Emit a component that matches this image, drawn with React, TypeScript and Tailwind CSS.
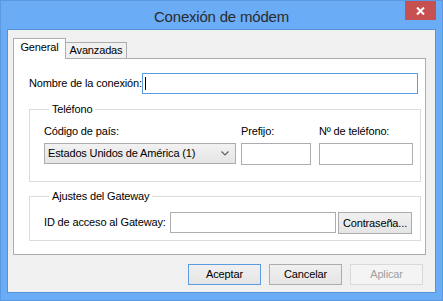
import React from 'react'

const font = { fontFamily: '"Liberation Sans", Arial, sans-serif' }

function TextBox({ className = '', focused = false }: { className?: string; focused?: boolean }) {
  return (
    <div
      className={`bg-white border ${focused ? 'border-[#5a9de2]' : 'border-[#abadb3]'} flex items-center pl-[2px] ${className}`}
    >
      {focused && <div className="w-px h-[13px] bg-black" />}
    </div>
  )
}

function Button({ label, kind = 'normal' }: { label: string; kind?: 'normal' | 'default' | 'disabled' }) {
  const border =
    kind === 'default' ? 'border-[#5b9de0]' : kind === 'disabled' ? 'border-[#d9d9d9]' : 'border-[#acacac]'
  const bg = kind === 'disabled' ? 'bg-[#f4f4f4]' : 'bg-gradient-to-b from-[#f0f0f0] to-[#e5e5e5]'
  const color = kind === 'disabled' ? 'text-[#a0a0a0]' : 'text-black'
  return (
    <div className={`w-[73px] h-[21px] border ${border} ${bg} ${color} flex items-center justify-center`}>
      {label}
    </div>
  )
}

export default function App() {
  return (
    <div
      style={font}
      className="w-[443px] h-[301px] bg-[#6aacf5] border border-[#5a98df] flex flex-col px-[6px] pb-[7px] text-[11px] tracking-[-0.15px] text-black"
    >
      {/* Title bar */}
      <div className="h-[28px] -mx-[6px] grid grid-cols-[1fr_auto_1fr]">
        <div />
        <div className="pt-[7px] text-[15px] leading-[18px] tracking-[-0.2px] text-[#2b2b2b]">Conexión de módem</div>
        <div className="flex justify-end pr-[6px]">
          <div className="w-[31px] h-[19px] bg-[#c75050] flex items-center justify-center">
            <svg width="9" height="8" viewBox="0 0 9 8">
              <path d="M1 0.5 L8 7.5 M8 0.5 L1 7.5" stroke="white" strokeWidth="2" />
            </svg>
          </div>
        </div>
      </div>

      {/* Client area */}
      <div className="flex-1 flex flex-col bg-[#f0f0f0] border border-[#5592d8] px-[5px] pt-[8px]">
        {/* Tabs */}
        <div className="flex items-end h-[20px]">
          <div className="relative z-10 w-[53px] h-[21px] -mb-px bg-white border-t border-l border-r border-[#adadad] flex justify-center pt-px leading-[15px]">
            General
          </div>
          <div className="w-[61px] h-[16px] border-t border-r border-[#adadad] bg-[#f0f0f0] flex justify-center leading-[15px]">
            Avanzadas
          </div>
        </div>

        {/* Tab panel */}
        <div className="w-[413px] h-[197px] bg-white border border-[#adadad] flex flex-col pl-[15px] pt-[14px]">
          <div className="flex items-center">
            <div className="w-[113px]">Nombre de la conexión:</div>
            <TextBox focused className="w-[276px] h-[21px]" />
          </div>

          <fieldset className="mt-[8px] w-[392px] border border-[#dcdcdc] pl-[14px] pt-[7px] pb-[16px]">
            <legend className="ml-[5px] px-[3px] leading-[15px]">Teléfono</legend>
            <div className="flex">
              <div className="flex flex-col">
                <div className="leading-[15px] mb-[4px]">Código de país:</div>
                <div className="w-[192px] h-[21px] border border-[#acacac] bg-gradient-to-b from-[#f2f2f2] to-[#e5e5e5] flex items-center pl-[3px] pr-[6px]">
                  <span className="flex-1">Estados Unidos de América (1)</span>
                  <svg width="8" height="5" viewBox="0 0 8 5">
                    <path d="M0.5 0.5 L4 4 L7.5 0.5" fill="none" stroke="#606060" strokeWidth="1.2" />
                  </svg>
                </div>
              </div>
              <div className="flex flex-col ml-[5px]">
                <div className="leading-[15px] mb-[4px]">Prefijo:</div>
                <TextBox className="w-[70px] h-[22px]" />
              </div>
              <div className="flex flex-col ml-[8px]">
                <div className="leading-[15px] mb-[4px]">Nº de teléfono:</div>
                <TextBox className="w-[94px] h-[22px]" />
              </div>
            </div>
          </fieldset>

          <fieldset className="mt-[7px] w-[392px] border border-[#dcdcdc] pl-[14px] pt-[8px] pb-[6px]">
            <legend className="ml-[5px] px-[3px] leading-[15px]">Ajustes del Gateway</legend>
            <div className="flex items-start">
              <div className="w-[126px] h-[21px] flex items-center">ID de acceso al Gateway:</div>
              <TextBox className="w-[166px] h-[21px]" />
              <div className="ml-[2px] w-[74px] h-[22px] border border-[#acacac] bg-gradient-to-b from-[#f0f0f0] to-[#e5e5e5] flex items-center justify-center">
                Contraseña...
              </div>
            </div>
          </fieldset>
        </div>

        {/* Dialog buttons */}
        <div className="mt-[9px] flex justify-end gap-[8px] pr-[7px]">
          <Button label="Aceptar" kind="default" />
          <Button label="Cancelar" />
          <Button label="Aplicar" kind="disabled" />
        </div>
      </div>
    </div>
  )
}
